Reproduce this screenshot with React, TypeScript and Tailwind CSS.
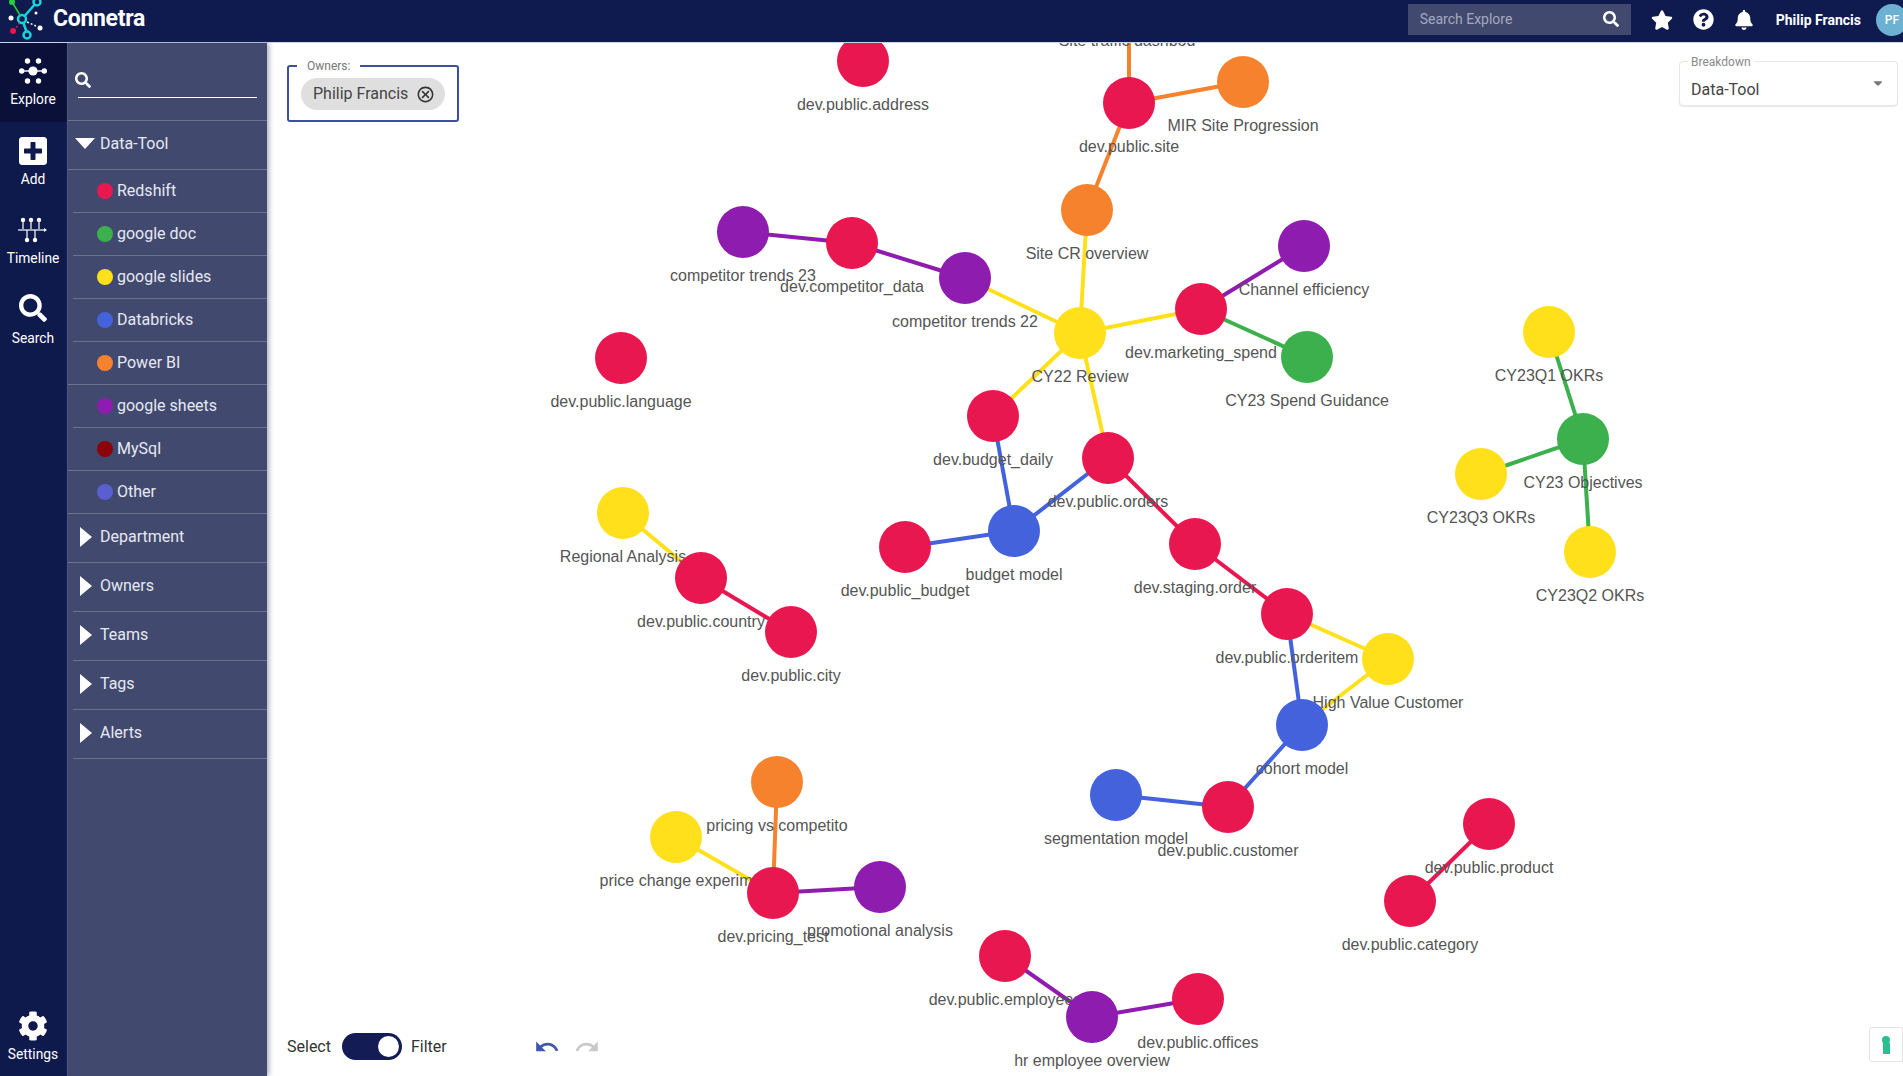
import React from "react";
import { FaSearch, FaStar, FaQuestionCircle, FaBell, FaCog, FaPlusSquare, FaCaretDown } from "react-icons/fa";
import { MdUndo, MdRedo, MdOutlineCancel } from "react-icons/md";

const RED = "#e8174f";
const ORANGE = "#f6822d";
const YELLOW = "#ffe01b";
const GREEN = "#3bb04c";
const BLUE = "#4462dc";
const PURPLE = "#8e1cae";

type GraphNode = { id: string; x: number; y: number; color: string; label: string };

const nodes: GraphNode[] = [
    { id: "address", x: 863, y: 61, color: RED, label: "dev.public.address" },
    { id: "site", x: 1129, y: 103, color: RED, label: "dev.public.site" },
    { id: "mir", x: 1243, y: 82, color: ORANGE, label: "MIR Site Progression" },
    { id: "cr", x: 1087, y: 210, color: ORANGE, label: "Site CR overview" },
    { id: "comp22", x: 965, y: 278, color: PURPLE, label: "competitor trends 22" },
    { id: "cy22", x: 1080, y: 333, color: YELLOW, label: "CY22 Review" },
    { id: "spend", x: 1201, y: 309, color: RED, label: "dev.marketing_spend" },
    { id: "channel", x: 1304, y: 246, color: PURPLE, label: "Channel efficiency" },
    { id: "guidance", x: 1307, y: 357, color: GREEN, label: "CY23 Spend Guidance" },
    { id: "comp23", x: 743, y: 232, color: PURPLE, label: "competitor trends 23" },
    { id: "compdata", x: 852, y: 243, color: RED, label: "dev.competitor_data" },
    { id: "language", x: 621, y: 358, color: RED, label: "dev.public.language" },
    { id: "daily", x: 993, y: 416, color: RED, label: "dev.budget_daily" },
    { id: "orders", x: 1108, y: 458, color: RED, label: "dev.public.orders" },
    { id: "budget", x: 1014, y: 531, color: BLUE, label: "budget model" },
    { id: "pubbudget", x: 905, y: 547, color: RED, label: "dev.public_budget" },
    { id: "staging", x: 1195, y: 544, color: RED, label: "dev.staging.order" },
    { id: "orderitem", x: 1287, y: 614, color: RED, label: "dev.public.orderitem" },
    { id: "high", x: 1388, y: 659, color: YELLOW, label: "High Value Customer" },
    { id: "cohort", x: 1302, y: 725, color: BLUE, label: "cohort model" },
    { id: "customer", x: 1228, y: 807, color: RED, label: "dev.public.customer" },
    { id: "segment", x: 1116, y: 795, color: BLUE, label: "segmentation model" },
    { id: "product", x: 1489, y: 824, color: RED, label: "dev.public.product" },
    { id: "category", x: 1410, y: 901, color: RED, label: "dev.public.category" },
    { id: "regional", x: 623, y: 513, color: YELLOW, label: "Regional Analysis" },
    { id: "country", x: 701, y: 578, color: RED, label: "dev.public.country" },
    { id: "city", x: 791, y: 632, color: RED, label: "dev.public.city" },
    { id: "pricing", x: 777, y: 782, color: ORANGE, label: "pricing vs competito" },
    { id: "change", x: 676, y: 837, color: YELLOW, label: "price change experim" },
    { id: "test", x: 773, y: 893, color: RED, label: "dev.pricing_test" },
    { id: "promo", x: 880, y: 887, color: PURPLE, label: "promotional analysis" },
    { id: "employee", x: 1005, y: 956, color: RED, label: "dev.public.employees" },
    { id: "hr", x: 1092, y: 1017, color: PURPLE, label: "hr employee overview" },
    { id: "offices", x: 1198, y: 999, color: RED, label: "dev.public.offices" },
    { id: "q1", x: 1549, y: 332, color: YELLOW, label: "CY23Q1 OKRs" },
    { id: "objectives", x: 1583, y: 439, color: GREEN, label: "CY23 Objectives" },
    { id: "q3", x: 1481, y: 474, color: YELLOW, label: "CY23Q3 OKRs" },
    { id: "q2", x: 1590, y: 552, color: YELLOW, label: "CY23Q2 OKRs" },
];

const edges: [string, string, string][] = [
    ["site", "mir", ORANGE],
    ["site", "cr", ORANGE],
    ["cr", "cy22", YELLOW],
    ["comp22", "cy22", YELLOW],
    ["comp23", "compdata", PURPLE],
    ["compdata", "comp22", PURPLE],
    ["cy22", "spend", YELLOW],
    ["spend", "channel", PURPLE],
    ["spend", "guidance", GREEN],
    ["cy22", "daily", YELLOW],
    ["cy22", "orders", YELLOW],
    ["daily", "budget", BLUE],
    ["orders", "budget", BLUE],
    ["pubbudget", "budget", BLUE],
    ["orders", "staging", RED],
    ["staging", "orderitem", RED],
    ["orderitem", "high", YELLOW],
    ["orderitem", "cohort", BLUE],
    ["high", "cohort", YELLOW],
    ["cohort", "customer", BLUE],
    ["customer", "segment", BLUE],
    ["product", "category", RED],
    ["regional", "country", YELLOW],
    ["country", "city", RED],
    ["pricing", "test", ORANGE],
    ["change", "test", YELLOW],
    ["test", "promo", PURPLE],
    ["employee", "hr", PURPLE],
    ["hr", "offices", PURPLE],
    ["q1", "objectives", GREEN],
    ["q3", "objectives", GREEN],
    ["q2", "objectives", GREEN],
];

const byId = Object.fromEntries(nodes.map((n) => [n.id, n]));

const tools = [
    { name: "Redshift", dot: "bg-[#e8174f]", inset: true },
    { name: "google doc", dot: "bg-[#3bb04c]", inset: true },
    { name: "google slides", dot: "bg-[#ffe01b]", inset: true },
    { name: "Databricks", dot: "bg-[#4462dc]", inset: true },
    { name: "Power BI", dot: "bg-[#f6822d]", inset: false },
    { name: "google sheets", dot: "bg-[#8e1cae]", inset: true },
    { name: "MySql", dot: "bg-[#8b0009]", inset: false },
    { name: "Other", dot: "bg-[#5a5fd0]", inset: false },
];

const sections = [
    { name: "Department", inset: false },
    { name: "Owners", inset: true },
    { name: "Teams", inset: true },
    { name: "Tags", inset: true },
    { name: "Alerts", inset: true },
];

const Logo = () => (
    <svg width="48" height="42" viewBox="0 0 48 42" fill="none">
        <g stroke="#19d3da" strokeWidth="2.5">
            <path d="M22 20 L36 4 M22 20 L27 34" />
            <circle cx="22" cy="20" r="4" fill="#0f1a4f" />
            <circle cx="37" cy="3" r="3.5" fill="#0f1a4f" />
            <circle cx="27" cy="36" r="3.5" fill="#0f1a4f" />
        </g>
        <path d="M12 3 L20 16" stroke="#25d03a" strokeWidth="1.5" />
        <circle cx="12" cy="3" r="3" fill="#25d03a" />
        <path d="M14 32 L20 23" stroke="#e8174f" strokeWidth="1.5" strokeDasharray="2 2" />
        <circle cx="13" cy="32" r="3" fill="#e8174f" />
        <circle cx="11" cy="19" r="2.5" fill="#fff" />
        <circle cx="36" cy="14" r="1.5" fill="#fff" />
        <path d="M27 23 L36 27" stroke="#fff" strokeWidth="1.5" strokeDasharray="2 2" />
        <circle cx="40" cy="29" r="2.5" fill="#fff" />
    </svg>
);

const ExploreIcon = () => (
    <svg width="28" height="26" viewBox="0 0 28 26" fill="#fff">
        <circle cx="14" cy="13" r="4.6" />
        <circle cx="8.5" cy="3" r="2.7" />
        <circle cx="19.5" cy="3" r="2.7" />
        <circle cx="2.7" cy="13" r="2.7" />
        <circle cx="25.3" cy="13" r="2.7" />
        <circle cx="8.5" cy="23" r="2.7" />
        <circle cx="19.5" cy="23" r="2.7" />
        <path d="M4 12.3h20v1.4H4z" />
    </svg>
);

const TimelineIcon = () => (
    <svg width="30" height="26" viewBox="0 0 30 26" fill="#fff" stroke="#fff">
        <circle cx="5" cy="3" r="2.2" stroke="none" />
        <circle cx="13" cy="3" r="2.2" stroke="none" />
        <circle cx="21" cy="3" r="2.2" stroke="none" />
        <circle cx="9" cy="23" r="2.2" stroke="none" />
        <circle cx="17" cy="23" r="2.2" stroke="none" />
        <path d="M5 3v9M13 3v9M21 3v9M9 13v9M17 13v9" strokeWidth="1.2" />
        <path d="M0 13h27" strokeWidth="1.2" />
        <path d="M26 11l3 2-3 2z" stroke="none" />
    </svg>
);

const TriangleRight = () => (
    <svg width="12" height="20" viewBox="0 0 12 20" fill="#fff" className="shrink-0">
        <path d="M0 0 L12 10 L0 20 Z" />
    </svg>
);

const TriangleDown = () => (
    <svg width="20" height="11" viewBox="0 0 20 11" fill="#fff" className="shrink-0">
        <path d="M0 0 H20 L10 11 Z" />
    </svg>
);

const RailItem = ({ icon, label, className }: { icon: React.ReactNode; label: string; className: string }) => (
    <div className={`flex flex-col items-center pr-[1px] text-white ${className}`}>
        <div className="h-7 flex items-center justify-center">{icon}</div>
        <span className="text-[13.8px] leading-4 mt-[6px]">{label}</span>
    </div>
);

export default function App() {
    return (
        <div className="w-screen h-screen overflow-hidden flex flex-col bg-white font-['Roboto',sans-serif]">
            <header className="h-[43px] shrink-0 bg-[#0f1a4f] border-b border-[#c9d6e6] flex items-center pb-[3px] overflow-hidden">
                <Logo />
                <span className="ml-[5px] text-[23px] font-bold text-white tracking-[-0.3px]">Connetra</span>
                <div className="ml-auto w-[223px] h-[31px] bg-[#414a6e] flex items-center justify-between pl-3 pr-[12px] pb-[2px] text-sm text-[#a4a8bf]">
                    <span>Search Explore</span>
                    <FaSearch className="text-white text-base" />
                </div>
                <FaStar className="ml-[20px] text-white text-[22px]" />
                <FaQuestionCircle className="ml-[20px] text-white text-[21px]" />
                <FaBell className="ml-[20px] text-white text-[20px]" />
                <span className="ml-[22px] text-sm font-bold text-white whitespace-nowrap">Philip Francis</span>
                <div className="ml-[15px] mr-[-5px] w-[32px] h-[32px] shrink-0 rounded-full bg-[#6cb1d1] text-white text-xs font-medium flex items-center justify-center">PF</div>
            </header>

            <div className="flex-1 flex min-h-0">
                <nav className="w-[67px] shrink-0 bg-[#0f1a4c] flex flex-col">
                    <RailItem className="bg-[#0a1038] h-[79px] pt-[14px]" icon={<ExploreIcon />} label="Explore" />
                    <RailItem className="mt-[15px]" icon={<FaPlusSquare className="text-[32px]" />} label="Add" />
                    <RailItem className="mt-[29px]" icon={<TimelineIcon />} label="Timeline" />
                    <RailItem className="mt-[30px]" icon={<FaSearch className="text-[28px] -translate-y-[2px]" />} label="Search" />
                    <RailItem className="mt-auto mb-[14px]" icon={<FaCog className="text-[30px]" />} label="Settings" />
                </nav>

                <aside className="w-[200px] shrink-0 bg-[#414a6e] border-l border-[#4b5688] shadow-[2px_0_5px_rgba(65,74,110,0.45)] z-10 text-base text-[#e6e8f2]">
                    <div className="h-[78px] px-[9px] pt-[29px] border-b border-[#6b7290]">
                        <FaSearch className="text-white text-base ml-[-2px]" />
                        <div className="mt-[9px] ml-[1px] mr-[1px] border-b border-white" />
                    </div>
                    <div className="h-[49px] flex items-center border-b border-[#6b7290] pb-[3px] pl-[7px]">
                        <TriangleDown />
                        <span className="ml-[5px]">Data-Tool</span>
                    </div>
                    {tools.map((t) => (
                        <div key={t.name} className={t.inset ? "h-[43px] ml-[5px] flex items-center border-b border-[#6b7290] pb-[1px]" : "h-[43px] flex items-center border-b border-[#6b7290] pb-[1px]"}>
                            <span className={t.inset ? `ml-[24px] w-4 h-4 rounded-full ${t.dot}` : `ml-[29px] w-4 h-4 rounded-full ${t.dot}`} />
                            <span className="ml-[4px]">{t.name}</span>
                        </div>
                    ))}
                    {sections.map((s) => (
                        <div key={s.name} className={s.inset ? "h-[49px] ml-[5px] pl-[7px] flex items-center border-b border-[#6b7290] pb-[2px]" : "h-[49px] pl-[12px] flex items-center border-b border-[#6b7290] pb-[2px]"}>
                            <TriangleRight />
                            <span className="ml-[8px]">{s.name}</span>
                        </div>
                    ))}
                </aside>

                <main className="relative flex-1 min-w-0 overflow-hidden text-[#444]">
                    {/* graph uses page coordinates, main starts at 267,43 */}
                    <svg className="absolute inset-0" width="1636" height="1033" viewBox="267 43 1636 1033">
                        <line x1="1129" y1="103" x2="1129" y2="30" stroke={ORANGE} strokeWidth="4" />
                        {edges.map(([a, b, color]) => (
                            <line key={a + b} x1={byId[a].x} y1={byId[a].y} x2={byId[b].x} y2={byId[b].y} stroke={color} strokeWidth="4" />
                        ))}
                        <text x="1127" y="46" textAnchor="middle" className="fill-[#555] text-base font-['Liberation_Sans',sans-serif]">Site traffic dashbod</text>
                        {nodes.map((n) => (
                            <text key={n.id} x={n.x} y={n.y + 48.5} textAnchor="middle" className="fill-[#555] text-base font-['Liberation_Sans',sans-serif]">{n.label}</text>
                        ))}
                        {nodes.map((n) => (
                            <circle key={n.id} cx={n.x} cy={n.y} r="26" fill={n.color} />
                        ))}
                    </svg>

                    <div className="absolute left-[20px] top-[22px] w-[172px] h-[57px] border-2 border-[#3f4f9f] rounded-[3px] px-[12px] pt-[11px] bg-white">
                        <span className="absolute left-[8px] top-[-9px] bg-white px-[10px] text-xs text-[#777]">Owners:</span>
                        <div className="w-[144px] h-[32px] rounded-full bg-[#e0dfe0] flex items-center justify-between pl-[12px] pr-[10px] text-base text-[#444]">
                            <span>Philip Francis</span>
                            <MdOutlineCancel className="text-[19px] text-[#333]" />
                        </div>
                    </div>

                    <div className="absolute right-[5px] top-[18px] w-[219px] h-[45px] border border-[#e6e6e6] bg-white rounded-sm shadow-[0_1px_1px_rgba(0,0,0,0.08)] pl-[11px] flex items-center justify-between pr-[13px]">
                        <span className="absolute left-[8px] top-[-8px] bg-white px-[3px] text-xs text-[#888]">Breakdown</span>
                        <span className="text-base text-[#444] mt-[12px]">Data-Tool</span>
                        <FaCaretDown className="text-[#777] text-sm mt-[-2px] translate-x-[1px]" />
                    </div>

                    <div className="absolute left-[20px] top-[990px] h-[27px] flex items-center text-base text-[#333]">
                        <span>Select</span>
                        <div className="ml-[11px] w-[60px] h-[27px] rounded-full bg-[#141c55] flex items-center justify-end pr-[3px]">
                            <div className="w-[21px] h-[21px] rounded-full bg-white" />
                        </div>
                        <span className="ml-[9px]">Filter</span>
                        <MdUndo className="ml-[87px] text-[26px] text-[#3f55b5]" />
                        <MdRedo className="ml-[14px] text-[26px] text-[#c9c9c9]" />
                    </div>

                    <div className="absolute right-0 top-[984px] w-[34px] h-[35px] bg-white border border-[#e4e4e4] rounded-l-[3px] flex items-center justify-center">
                        <div className="flex flex-col items-center">
                            <div className="w-[8px] h-[8px] rounded-full bg-[#2ac08d]" />
                            <div className="w-[7px] h-[11px] mt-[-1px] bg-[#2ac08d]" />
                        </div>
                    </div>
                </main>
            </div>
        </div>
    );
}
